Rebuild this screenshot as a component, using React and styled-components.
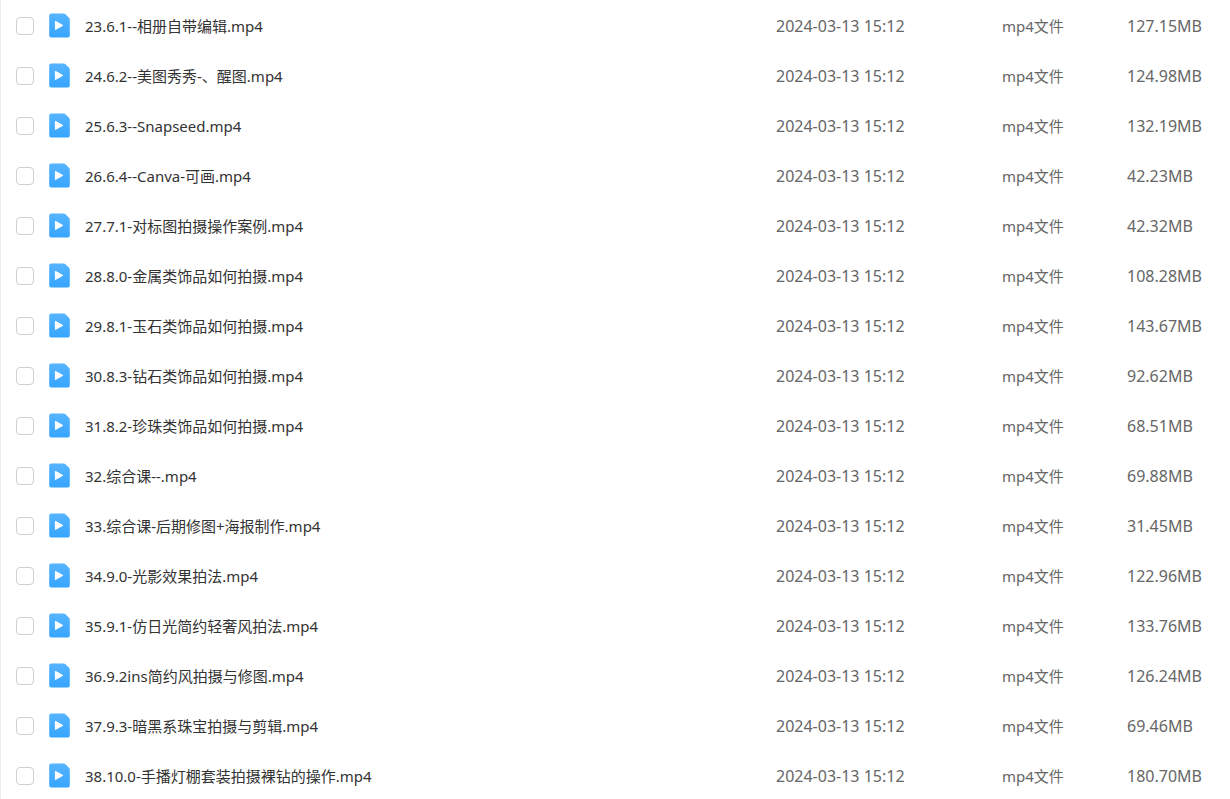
import React from 'react';
import styled, { createGlobalStyle } from 'styled-components';

const GlobalStyle = createGlobalStyle`
    * {
        box-sizing: border-box;
    }
    html {
        scrollbar-width: none;
    }
    body {
        margin: 0;
        background: #fff;
        font-family: 'Noto Sans', 'Noto Sans CJK SC', sans-serif;
        font-size: 15px;
    }
`;

const FileTable = styled.table`
    width: 100%;
    padding-top: 1px;
    table-layout: fixed;
    border-collapse: separate;
    border-spacing: 0;
    border-left: 1px solid #ededf0;
`;

const Cell = styled.td`
    width: ${props => props.$width || 'auto'};
    height: 50px;
    padding: 0;
    color: ${props => (props.$strong ? '#333' : '#666')};
    font-size: ${props => (props.$large ? '16px' : '15px')};
    line-height: 20px;
    white-space: nowrap;
    text-align: left;
`;

const FileLabel = styled.label`
    display: flex;
    align-items: center;
    padding-left: 15px;
`;

const Checkbox = styled.input`
    appearance: none;
    flex: none;
    width: 18px;
    height: 18px;
    margin: 0 15px 0 0;
    border: 1px solid #d0d0d4;
    border-radius: 4px;
    background: #fff;
    &:checked {
        border-color: #3aa5ff;
        background: #3aa5ff;
    }
`;

const Icon = styled.svg`
    flex: none;
    width: 22px;
    height: 26px;
    margin-right: 14px;
`;

const files = [
    ['23.6.1--相册自带编辑.mp4', '127.15MB'],
    ['24.6.2--美图秀秀-、醒图.mp4', '124.98MB'],
    ['25.6.3--Snapseed.mp4', '132.19MB'],
    ['26.6.4--Canva-可画.mp4', '42.23MB'],
    ['27.7.1-对标图拍摄操作案例.mp4', '42.32MB'],
    ['28.8.0-金属类饰品如何拍摄.mp4', '108.28MB'],
    ['29.8.1-玉石类饰品如何拍摄.mp4', '143.67MB'],
    ['30.8.3-钻石类饰品如何拍摄.mp4', '92.62MB'],
    ['31.8.2-珍珠类饰品如何拍摄.mp4', '68.51MB'],
    ['32.综合课--.mp4', '69.88MB'],
    ['33.综合课-后期修图+海报制作.mp4', '31.45MB'],
    ['34.9.0-光影效果拍法.mp4', '122.96MB'],
    ['35.9.1-仿日光简约轻奢风拍法.mp4', '133.76MB'],
    ['36.9.2ins简约风拍摄与修图.mp4', '126.24MB'],
    ['37.9.3-暗黑系珠宝拍摄与剪辑.mp4', '69.46MB'],
    ['38.10.0-手播灯棚套装拍摄裸钻的操作.mp4', '180.70MB'],
];

const VideoIcon = () => (
    <Icon viewBox="0 0 22 26" aria-hidden="true">
        <defs>
            <linearGradient id="sheet" x1="0" y1="0" x2="0" y2="1">
                <stop offset="0" stopColor="#56b4ff" />
                <stop offset="1" stopColor="#36a5ff" />
            </linearGradient>
        </defs>
        <path
            d="M2.200.4h12.600c.6 0 1 .2 1.400.6l4 4c.4.4.6.9.6 1.400v16.200a2 2 0 0 1-2 2H2.200a2 2 0 0 1-2-2V2.400a2 2 0 0 1 2-2z"
            fill="url(#sheet)"
        />
        <path d="M6.400 8.300v8.200l7.400-4.100z" fill="#fff" stroke="#fff" strokeLinejoin="round" />
    </Icon>
);

const FileRow = ({ name, size }) => (
    <tr>
        <Cell $strong>
            <FileLabel>
                <Checkbox type="checkbox" />
                <VideoIcon />
                {name}
            </FileLabel>
        </Cell>
        <Cell $width="226px" $large>
            2024-03-13 15:12
        </Cell>
        <Cell $width="125px">mp4文件</Cell>
        <Cell $width="103px" $large>
            {size}
        </Cell>
    </tr>
);

const App = () => (
    <>
        <GlobalStyle />
        <FileTable>
            <tbody>
                {files.map(([name, size]) => (
                    <FileRow key={name} name={name} size={size} />
                ))}
            </tbody>
        </FileTable>
    </>
);

export default App;
